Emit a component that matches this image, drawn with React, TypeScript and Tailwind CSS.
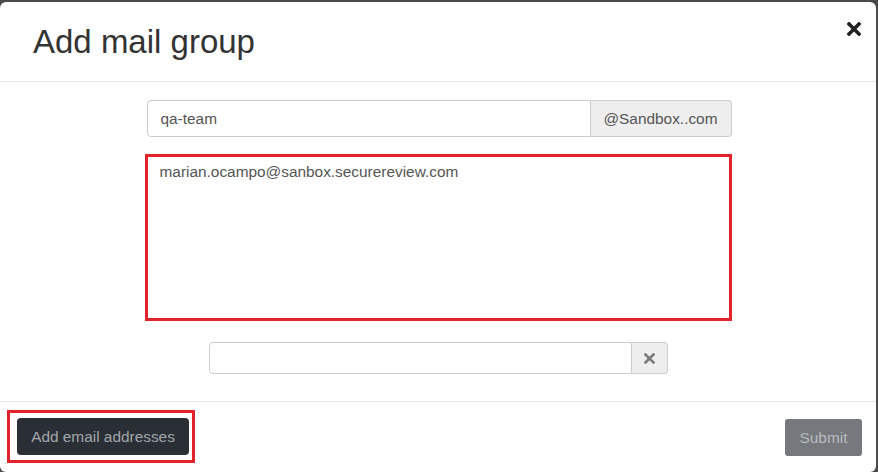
const font = { fontFamily: '"Liberation Sans", Arial, sans-serif' };

function TimesIcon({ size, color, weight }: { size: number; color: string; weight: number }) {
  return (
    <svg width={size} height={size} viewBox="0 0 14 14" fill="none">
      <path d="M2 2 L12 12 M12 2 L2 12" stroke={color} strokeWidth={weight} strokeLinecap="square" />
    </svg>
  );
}

export default function App() {
  return (
    <div className="h-[472px] w-[878px] overflow-hidden bg-[#4b4b4b] pt-[2px]" style={font}>
      <div className="flex h-[470px] w-[876px] flex-col rounded-[6px] bg-white">
        <div className="flex h-[80px] shrink-0 items-start justify-between border-b border-[#e5e5e5] pl-[33px] pr-[15px]">
          <h2 className="mt-[22px] text-[33px] font-normal leading-[36px] text-[#333]">Add mail group</h2>
          <button className="mt-[20px] flex h-[14px] w-[14px] items-center justify-center">
            <TimesIcon size={14} color="#222" weight={3.6} />
          </button>
        </div>

        <div className="flex h-[319px] shrink-0 flex-col items-center pt-[18px]">
          <div className="ml-[2px] flex h-[37px] w-[585px] text-[15.4px] text-[#555]">
            <div className="flex flex-1 items-center rounded-l-[4px] border border-[#ccc] pl-[13px]">qa-team</div>
            <div className="flex w-[141px] items-center justify-center rounded-r-[4px] border border-l-0 border-[#ccc] bg-[#eee]">
              @Sandbox..com
            </div>
          </div>

          <div className="mt-[17px] h-[167px] w-[587px] border-[3px] border-[#e3232b] bg-white">
            <div className="pl-[12px] pt-[5px] text-[15.4px] leading-[20px] text-[#555]">
              marian.ocampo@sanbox.securereview.com
            </div>
          </div>

          <div className="mt-[21px] ml-[1px] flex h-[32px] w-[459px]">
            <div className="flex-1 rounded-l-[4px] border border-[#ccc] bg-white" />
            <div className="flex w-[36px] items-center justify-center rounded-r-[4px] border border-l-0 border-[#ccc] bg-[#eee]">
              <TimesIcon size={11} color="#7a7a7a" weight={3.4} />
            </div>
          </div>
        </div>

        <div className="flex flex-1 items-start justify-between border-t border-[#e5e5e5] pl-[7px] pr-[14px] pt-[8px]">
          <div className="border-[3px] border-[#e3232b] pb-[5px] pl-[7px] pr-[3px] pt-[5px]">
            <button className="flex h-[37px] w-[172px] items-center justify-center rounded-[4px] bg-[#2a2e35] text-[15.4px] text-[#a3a6ab]">
              Add email addresses
            </button>
          </div>
          <button className="mt-[9px] flex h-[37px] w-[77px] items-center justify-center rounded-[3px] bg-[#75787c] text-[15.4px] text-[#b9bbbe]">
            Submit
          </button>
        </div>
      </div>
    </div>
  );
}
